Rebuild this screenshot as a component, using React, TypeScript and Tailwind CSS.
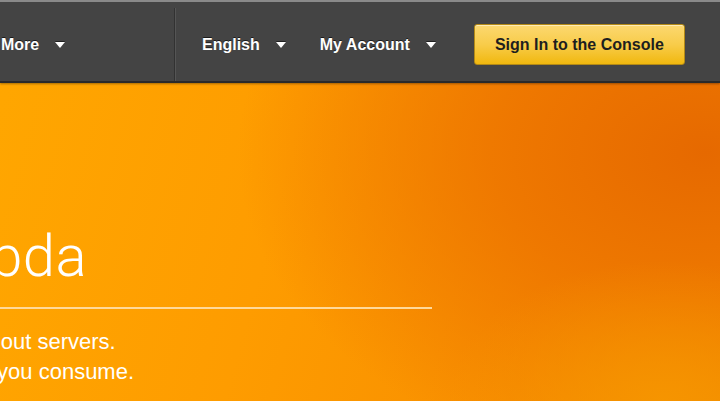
import React from 'react';

const Caret: React.FC = () => (
  <svg width="10" height="7" viewBox="0 0 10 7" className="shrink-0">
    <polygon points="0,0 10,0 5,6" fill="#1f1f1f" />
    <polygon points="0,1 10,1 5,7" fill="#ffffff" />
  </svg>
);

const NavItem: React.FC<{ label: string }> = ({ label }) => (
  <div className="flex items-center gap-4 text-white font-bold text-[16px] leading-none [text-shadow:0_-1px_0_rgba(0,0,0,0.6)]">
    <span>{label}</span>
    <Caret />
  </div>
);

export default function App() {
  return (
    <div
      className="w-[720px] h-[401px] overflow-hidden relative bg-[radial-gradient(ellipse_30%_35%_at_92%_100%,rgba(246,150,0,0.9)_0%,rgba(246,150,0,0)_100%),radial-gradient(ellipse_65%_80%_at_98%_38%,#e66900_0%,rgba(236,114,0,0.8)_45%,rgba(240,130,0,0)_100%),linear-gradient(105deg,#ffa700_0%,#fe9c00_40%,#f88f00_75%,#f49300_100%)]"
      style={{ fontFamily: '"Liberation Sans", Arial, sans-serif' }}
    >
      <header className="h-[83px] bg-[#444444] border-t-2 border-[#8a8a8a] border-b-2 border-b-[#2a2a2a] flex pt-[6px] shadow-[0_1px_2px_rgba(0,0,0,0.35)]">
        <div className="w-[175px] flex items-center pl-px border-r border-[#323232]">
          <NavItem label="More" />
        </div>
        <div className="flex-1 flex items-center pl-[26px] border-l border-[#555555]">
          <NavItem label="English" />
          <div className="ml-[34px]">
            <NavItem label="My Account" />
          </div>
          <button className="ml-[38px] w-[211px] h-[41px] rounded-[3px] border border-[#b48a16] bg-[linear-gradient(180deg,#fcd870_0%,#f8cc4a_50%,#f1b80f_100%)] shadow-[inset_0_1px_0_rgba(255,255,255,0.5)] text-[#1e1e1e] font-bold text-[16px] leading-none">
            Sign In to the Console
          </button>
        </div>
      </header>

      <section className="ml-[-598px] w-[1030px] pt-[143px] text-center text-white">
        <h1
          className="text-[58px] leading-[60px] font-light tracking-[0.5px] pr-[8px]"
          style={{ fontFamily: 'Roboto, "Liberation Sans", sans-serif' }}
        >
          AWS Lambda
        </h1>
        <div className="mt-[21px] h-[2px] bg-[#ffd99a]" />
        <p className="mt-[18px] text-[22px] leading-[30px]">
          Run code without thinking about servers.
          <br />
          Pay for only the compute time you consume.
        </p>
      </section>
    </div>
  );
}
